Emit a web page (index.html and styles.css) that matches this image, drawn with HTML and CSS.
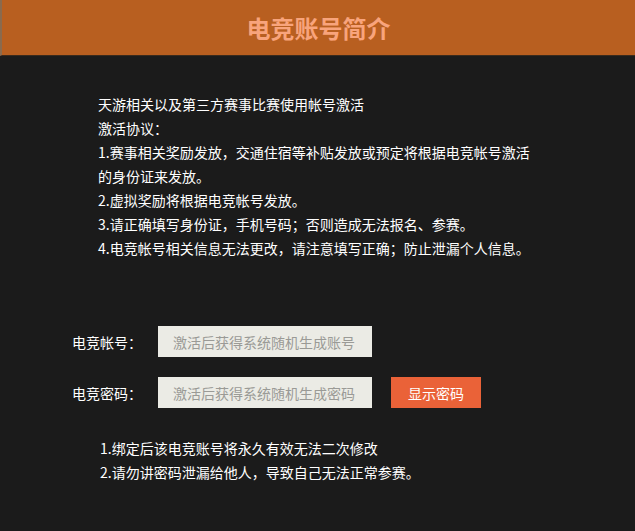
FILE: index.html
```html
<!DOCTYPE html>
<html lang="zh-CN">

<head>
    <meta charset="UTF-8">
    <meta name="viewport" content="width=device-width, initial-scale=1.0">
    <title>电竞账号简介</title>
    <link rel="stylesheet" href="styles.css">
</head>

<body>
    <div class="header">
        <h1>电竞账号简介</h1>
    </div>

    <div class="intro">
        <p>天游相关以及第三方赛事比赛使用帐号激活</p>
        <p>激活协议：</p>
        <p>1.赛事相关奖励发放，交通住宿等补贴发放或预定将根据电竞帐号激活的身份证来发放。</p>
        <p>2.虚拟奖励将根据电竞帐号发放。</p>
        <p>3.请正确填写身份证，手机号码；否则造成无法报名、参赛。</p>
        <p>4.电竞帐号相关信息无法更改，请注意填写正确；防止泄漏个人信息。</p>
    </div>

    <form class="account-form">
        <div class="row">
            <label for="account">电竞帐号：</label>
            <input type="text" id="account" placeholder="激活后获得系统随机生成账号" readonly>
        </div>
        <div class="row">
            <label for="password">电竞密码：</label>
            <input type="password" id="password" placeholder="激活后获得系统随机生成密码" readonly>
            <button type="button" id="show-btn">显示密码</button>
        </div>
    </form>

    <div class="notes">
        <p>1.绑定后该电竞账号将永久有效无法二次修改</p>
        <p>2.请勿讲密码泄漏给他人，导致自己无法正常参赛。</p>
    </div>
</body>

</html>
```
FILE: styles.css
```css
html,
body {
    height: 100%;
}

body {
    margin: 0;
    background-color: #1b1b1b;
    color: #ffffff;
    font-family: "Microsoft YaHei", "Noto Sans CJK SC", sans-serif;
    font-size: 14px;
}

.header {
    height: 55px;
    background-color: #b85f20;
    border-left: 2px solid #8a6a4e;
    border-bottom: 1px solid #3a2a1c;
    display: flex;
    align-items: center;
    justify-content: center;
}

.header h1 {
    margin: 0;
    color: #f8a47c;
    font-size: 24px;
    font-weight: bold;
}

.intro {
    width: 440px;
    margin: 36px 0 0 98px;
}

.intro p,
.notes p {
    margin: 0;
    line-height: 24px;
}

.account-form {
    margin: 66px 0 0 72px;
}

.row {
    display: flex;
    align-items: center;
    height: 31px;
    margin-bottom: 20px;
}

.row label {
    width: 86px;
}

.row input {
    width: 214px;
    height: 31px;
    box-sizing: border-box;
    border: none;
    padding: 0 15px;
    background-color: #ebebe5;
    font-family: inherit;
    font-size: 14px;
    color: #333;
}

.row input::placeholder {
    color: #9a9a96;
}

.row button {
    margin-left: 19px;
    width: 90px;
    height: 31px;
    border: none;
    background-color: #ea6238;
    color: #ffffff;
    font-family: inherit;
    font-size: 14px;
    cursor: pointer;
}

.notes {
    margin: 28px 0 0 100px;
}
```
